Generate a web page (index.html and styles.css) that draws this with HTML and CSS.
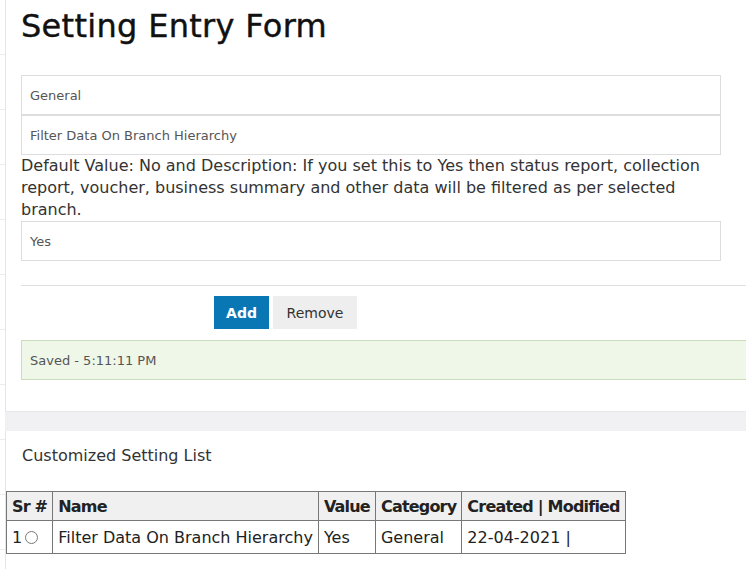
FILE: index.html
```html
<!DOCTYPE html>
<html lang="en">
  <head>
    <meta charset="UTF-8" />
    <meta name="viewport" content="width=device-width, initial-scale=1.0" />
    <title>Setting Entry Form</title>
    <link rel="stylesheet" href="styles.css">
  </head>
  <body>
    <div class="page">
      <div class="rail"></div>

      <main class="content">
        <section class="card card-form">
          <h1 class="title">Setting Entry Form</h1>

          <div class="field-group">
            <div class="field">General</div>
            <div class="field">Filter Data On Branch Hierarchy</div>
          </div>

          <p class="description">
            Default Value: No and Description: If you set this to Yes then status report, collection
            report, voucher, business summary and other data will be filtered as per selected
            branch.
          </p>

          <div class="field">Yes</div>

          <hr class="divider">

          <div class="actions">
            <button class="btn btn-primary">Add</button>
            <button class="btn btn-light">Remove</button>
          </div>

          <div class="alert">Saved - 5:11:11 PM</div>
        </section>

        <section class="card card-list">
          <h2 class="list-title">Customized Setting List</h2>

          <table class="setting-table">
            <thead>
              <tr>
                <th>Sr #</th>
                <th>Name</th>
                <th>Value</th>
                <th>Category</th>
                <th>Created | Modified</th>
              </tr>
            </thead>
            <tbody>
              <tr>
                <td class="sr">1<span class="radio"></span></td>
                <td>Filter Data On Branch Hierarchy</td>
                <td>Yes</td>
                <td>General</td>
                <td>22-04-2021 |</td>
              </tr>
            </tbody>
          </table>
        </section>
      </main>
    </div>
  </body>
</html>
```

FILE: styles.css
```css
* {
  margin: 0;
  padding: 0;
  box-sizing: border-box;
}

html,
body {
  height: 100%;
  overflow: hidden;
}

body {
  font-family: "DejaVu Sans", sans-serif;
  color: #333;
  background: #f1f1f3;
}

.page {
  display: flex;
  min-height: 100%;
}

.rail {
  width: 5px;
  flex-shrink: 0;
  background: repeating-linear-gradient(#fff 0, #fff 54px, #ececec 54px, #ececec 55px);
}

.content {
  flex: 1;
  display: flex;
  flex-direction: column;
  gap: 19px;
}

.card {
  background: #fff;
  border-left: 1px solid #e6e6e6;
}

.card-form {
  padding: 4px 0 31px 15px;
  border-bottom: 1px solid #e8e8e8;
}

.title {
  font-size: 32px;
  font-weight: 400;
  line-height: 44px;
  letter-spacing: 0.3px;
  color: #111;
  -webkit-text-stroke: 0.4px #111;
  margin-bottom: 27px;
}

.field {
  width: 700px;
  height: 40px;
  border: 1px solid #ddd;
  padding: 0 8px;
  display: flex;
  align-items: center;
  font-size: 13px;
  color: #555;
  background: #fff;
}

.description {
  width: 700px;
  font-size: 16px;
  line-height: 22px;
  color: #333;
}

.divider {
  border: 0;
  border-top: 1px solid #e0e0e0;
  margin: 24px 0 10px;
}

.actions {
  display: flex;
  gap: 4px;
  margin-left: 193px;
}

.btn {
  height: 33px;
  border: 0;
  font-family: inherit;
  font-size: 14px;
  cursor: pointer;
}

.btn-primary {
  width: 55px;
  background: #0a77b5;
  color: #fff;
  font-weight: 700;
}

.btn-light {
  width: 84px;
  background: #eee;
  color: #333;
}

.alert {
  margin-top: 11px;
  height: 40px;
  padding: 0 8px;
  display: flex;
  align-items: center;
  font-size: 13px;
  color: #555;
  background: #eff7e9;
  border: 1px solid #c9dcbc;
  border-right: 0;
}

.card-list {
  flex: 1;
  padding-top: 15px;
}

.list-title {
  font-size: 16px;
  font-weight: 400;
  line-height: 20px;
  color: #333;
  margin: 0 0 25px 16px;
}

.setting-table {
  border-collapse: collapse;
  font-size: 16px;
  color: #222;
}

.setting-table th,
.setting-table td {
  border: 1px solid #777;
  padding: 0 5px;
  text-align: left;
  white-space: nowrap;
}

.setting-table th {
  height: 29px;
  font-weight: 700;
  letter-spacing: -0.8px;
  background: #f0f0f0;
}

.setting-table td {
  height: 33px;
}

.radio {
  display: inline-block;
  width: 13px;
  height: 13px;
  margin-left: 3px;
  border: 1px solid #777;
  border-radius: 50%;
  vertical-align: -1px;
}
```
